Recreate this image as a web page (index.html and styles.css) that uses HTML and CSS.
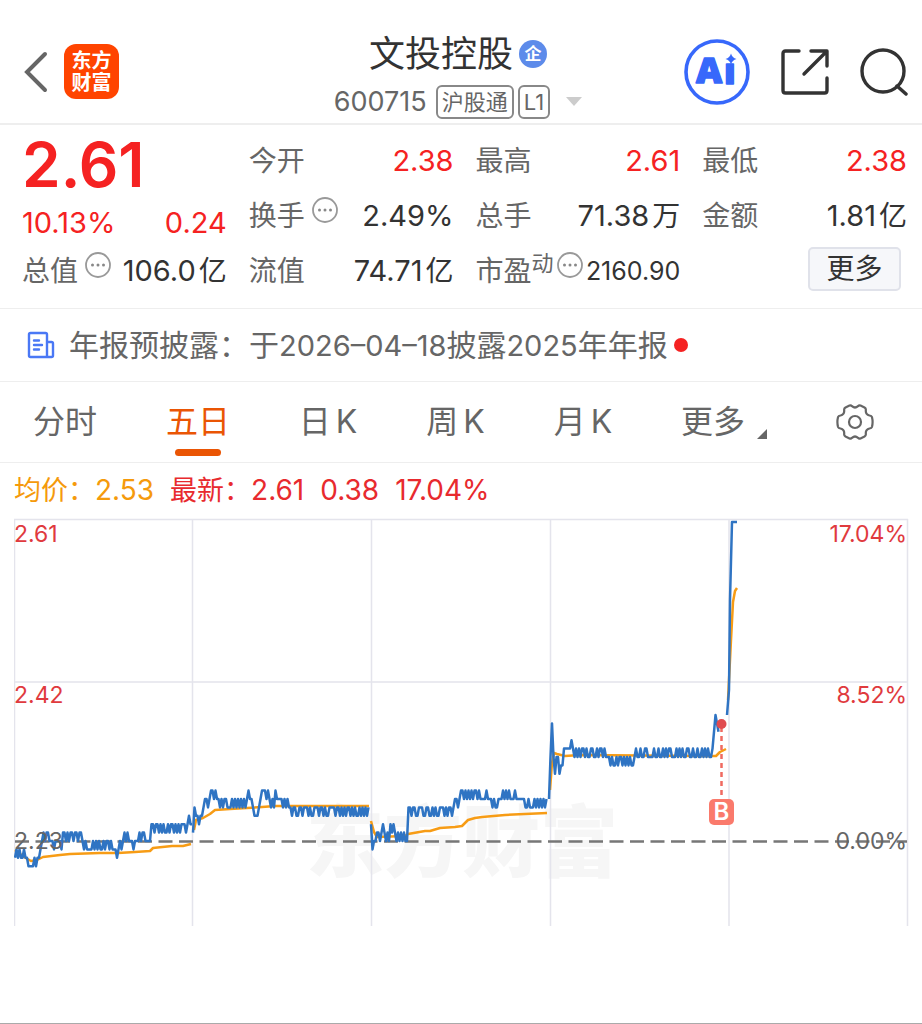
FILE: index.html
```html
<!DOCTYPE html>
<html lang="zh-CN">
<head>
<meta charset="UTF-8" />
<meta name="viewport" content="width=device-width, initial-scale=1" />
<title>文投控股 600715</title>
<link rel="stylesheet" href="styles.css">
</head>
<body>
<svg class="defs" width="0" height="0" aria-hidden="true">
  <symbol id="more" viewBox="0 0 26 26">
    <circle cx="13" cy="13" r="12" fill="none" stroke="#999" stroke-width="1.8" />
    <circle cx="7.5" cy="13" r="1.5" fill="#888" />
    <circle cx="13" cy="13" r="1.5" fill="#888" />
    <circle cx="18.5" cy="13" r="1.5" fill="#888" />
  </symbol>
</svg>

<header class="topbar">
  <div class="top-left">
    <button class="icon-btn" aria-label="返回">
      <svg width="24" height="42" viewBox="0 0 24 42"><path d="M21 3 3 21l18 18" fill="none" stroke="#666" stroke-width="4" stroke-linecap="round" /></svg>
    </button>
    <a class="logo" href="#">东方<br>财富</a>
  </div>
  <div class="top-center">
    <h1>文投控股
      <svg width="28" height="28" viewBox="0 0 28 28">
        <circle cx="14" cy="14" r="14" fill="#5d8bea" />
        <text x="14" y="20" text-anchor="middle" class="badge-text">企</text>
      </svg>
    </h1>
    <div class="code-row">
      <span class="code">600715</span>
      <span class="tag">沪股通</span>
      <span class="tag">L1</span>
      <svg class="caret" width="16" height="9" viewBox="0 0 16 9"><path d="M0 0h16L8 9z" fill="#ccc" /></svg>
    </div>
  </div>
  <div class="top-right">
    <button class="icon-btn" aria-label="Ai">
      <svg width="66" height="66" viewBox="0 0 66 66">
        <circle cx="33" cy="33" r="31" fill="none" stroke="#3768fb" stroke-width="3.6" />
        <text x="12" y="44" class="ai-text">A</text>
        <text x="40" y="45" class="ai-text">ı</text>
        <path d="M47 14.5q1.2 4.300 5.500 5.500-4.300 1.200-5.500 5.500-1.200-4.300-5.500-5.500 4.300-1.200 5.500-5.500z" fill="#3768fb" />
      </svg>
    </button>
    <button class="icon-btn" aria-label="分享">
      <svg width="48" height="48" viewBox="0 0 48 48" fill="none" stroke="#333" stroke-width="3.4" stroke-linecap="round" stroke-linejoin="round">
        <path d="M18 3H4.500Q2 3 2 5.500v37Q2 45 4.500 45h39q2.500 0 2.500-2.500V30" />
        <path d="M30 3h16v15M45 4 23 26" />
      </svg>
    </button>
    <button class="icon-btn" aria-label="搜索">
      <svg width="48" height="48" viewBox="0 0 48 48" fill="none" stroke="#333" stroke-width="3.4" stroke-linecap="round">
        <circle cx="23" cy="23" r="21" />
        <path d="m37 38 9 8" />
      </svg>
    </button>
  </div>
</header>

<section class="quote">
  <div class="price-box">
    <strong class="price">2.61</strong>
    <div class="change"><span>10.13%</span><span>0.24</span></div>
  </div>
  <div class="cell"><span class="label">今开</span><span class="value up">2.38</span></div>
  <div class="cell"><span class="label">最高</span><span class="value up">2.61</span></div>
  <div class="cell"><span class="label">最低</span><span class="value up">2.38</span></div>
  <div class="cell"><span class="label">换手</span><svg class="info"><use href="#more" /></svg><span class="value">2.49%</span></div>
  <div class="cell"><span class="label">总手</span><span class="value">71.38<i class="unit">万</i></span></div>
  <div class="cell"><span class="label">金额</span><span class="value">1.81<i class="unit">亿</i></span></div>
  <div class="cell"><span class="label">总值</span><svg class="info"><use href="#more" /></svg><span class="value">106.0<i class="unit">亿</i></span></div>
  <div class="cell"><span class="label">流值</span><span class="value">74.71<i class="unit">亿</i></span></div>
  <div class="cell pe"><span class="label">市盈<sup>动</sup></span><svg class="info"><use href="#more" /></svg><span class="value small">2160.90</span></div>
  <div class="cell"><button class="more-btn">更多</button></div>
</section>

<a class="notice" href="#">
  <svg width="28" height="28" viewBox="0 0 28 28" fill="none" stroke="#4a78f5" stroke-width="2.400" stroke-linejoin="round" stroke-linecap="round">
    <path d="M20 26H3.500Q2 26 2 24.500v-21Q2 2 3.500 2h15Q20 2 20 3.500zV11h4.500q1.500 0 1.500 1.500v12q0 1.500-1.500 1.500H20M7 9.500h5M7 14h8M7 18.500h5" />
  </svg>
  <span>年报预披露：于<span class="num">2026–04–18</span>披露<span class="num">2025</span>年年报</span>
  <span class="dot"></span>
</a>

<nav class="tabs">
  <button>分时</button>
  <button class="active">五日</button>
  <button>日<span class="k">K</span></button>
  <button>周<span class="k">K</span></button>
  <button>月<span class="k">K</span></button>
  <button>更多<svg class="corner" width="10" height="10" viewBox="0 0 10 10"><path d="M10 0v10H0z" fill="#666" /></svg></button>
  <button class="icon-btn" aria-label="设置">
    <svg width="38" height="36" viewBox="0 0 38 36" fill="none" stroke="#666" stroke-width="2.200" stroke-linejoin="round">
      <path d="M13.500 1.500Q15 1 16 2.200q3 2.600 6 0 1-1.200 2.500-.7l4 2q1.700 1 1.300 3-.3 4 3.700 5 2 .3 2.500 1.700 1.200 4.800 0 9.600-.5 1.400-2.500 1.700-4 1-3.700 5 .4 2-1.300 3l-4 2q-1.500.5-2.500-.7-3-2.600-6 0-1 1.200-2.500.7l-4-2q-1.700-1-1.300-3 .3-4-3.700-5-2-.3-2.500-1.700-1.200-4.800 0-9.600.5-1.400 2.500-1.700 4-1 3.700-5-.4-2 1.300-3z" />
      <circle cx="19" cy="18" r="6" />
    </svg>
  </button>
</nav>

<div class="legend">
  <span class="avg">均价：<span class="num">2.53</span></span>
  <span class="last">最新：<span class="num">2.61</span></span>
  <span class="last num">0.38</span>
  <span class="last num">17.04%</span>
</div>

<main class="chart">
  <svg viewBox="14 518 895 409" role="img" aria-label="五日走势">
    <text x="306" y="871" class="watermark">东方财富</text>
    <path class="grid" d="M14 519.500H908M14 682H908M14.500 519V926M192.500 519V926M371.500 519V926M550.500 519V926M729 519V926M907.500 519V926" />
    <path class="base" d="M15 841.500H907" />

    <g class="line avg-line">
      <polyline points="15,850 24,857 31,861 37,860 43,857 60,855 70,854 100,853 118,853 135,852 150,851 153,848 172,846 183,846 191,844" />
      <polyline points="194,830 196,820 203,818 210,814 215,810 230,809 247,808 262,807 275,806 369,806" />
      <polyline points="371,821 374,832 377,837 405,836 408,834 425,831 430,831 440,828 455,827 462,826 468,820 475,818 482,817 505,815 547,813" />
      <polyline points="550,790 552,763 554,753 557,754 565,756 580,755 700,756 716,756 720,752 726,749" />
      <polyline points="728,700 731,640 733,602 735,591 737,588" />
    </g>
    <g class="line price-line" id="priceLine">
      <polyline points="727,715 729,690 730,600 732,522 737,522" />
    </g>

    <path class="trade-link" d="M721.500 727V799" />
    <circle class="trade-dot" cx="721.500" cy="724" r="5" />
    <rect class="trade-flag" x="709" y="799" width="25" height="26" rx="5" />
    <text x="721.500" y="820" text-anchor="middle" class="trade-text">B</text>

    <g class="axis">
      <text x="14" y="542">2.61</text>
      <text x="14" y="703">2.42</text>
      <text x="14" y="849" class="mid">2.23</text>
    </g>
    <g class="axis" text-anchor="end">
      <text x="907" y="542">17.04%</text>
      <text x="907" y="703">8.52%</text>
      <text x="907" y="849" class="mid">0.00%</text>
    </g>
  </svg>
</main>

<script src="chart.js"></script>
</body>
</html>
```
FILE: styles.css
```css
* {
  margin: 0;
  padding: 0;
  box-sizing: border-box;
}
body {
  font-family: Inter, "Noto Sans CJK SC", sans-serif;
  background: #fff;
  color: #333;
  min-height: 100vh;
  border-bottom: 1px solid #aaa;
}
button {
  font: inherit;
  color: inherit;
  background: none;
  border: none;
  cursor: pointer;
}
a {
  color: inherit;
  text-decoration: none;
}
svg {
  display: block;
  flex: none;
}
.defs {
  position: absolute;
}

.topbar {
  display: grid;
  grid-template-columns: 1fr auto 1fr;
  align-items: center;
  padding: 26px 14px 0;
  height: 125px;
  border-bottom: 2px solid #eee;
}
.top-left, .top-right {
  display: flex;
  align-items: center;
  padding-bottom: 6px;
}
.top-left {
  gap: 16px;
  padding-left: 10px;
}
.top-right {
  justify-content: flex-end;
  gap: 31px;
}
.logo {
  width: 55px;
  height: 55px;
  padding-top: 6px;
  border-radius: 12px;
  background: #ff4400;
  color: #fff;
  font-size: 20px;
  font-weight: 700;
  line-height: 22px;
  text-align: center;
}
.top-center {
  padding-right: 6px;
}
h1 {
  display: flex;
  align-items: center;
  justify-content: center;
  gap: 6px;
  font-size: 36px;
  font-weight: 400;
  line-height: 54px;
}
.badge-text {
  font-size: 17px;
  font-weight: 700;
  fill: #fff;
}
.code-row {
  display: flex;
  align-items: center;
  gap: 4px;
  height: 42px;
  color: #666;
}
.code {
  font-size: 27px;
  margin-right: 5px;
}
.tag {
  height: 34px;
  padding: 0 4px;
  border: 2px solid #888;
  border-radius: 6px;
  font-size: 22px;
  line-height: 30px;
}
.caret {
  margin-left: 12px;
}
.ai-text {
  font-family: "Open Sans", sans-serif;
  font-size: 36px;
  font-weight: 800;
  fill: #3768fb;
  stroke: #3768fb;
  stroke-width: 1.5;
  stroke-linejoin: round;
}

.quote {
  display: grid;
  grid-template-columns: repeat(4, 1fr);
  grid-auto-rows: 55px;
  column-gap: 22px;
  padding: 8px 15px 10px 22px;
  border-bottom: 1px solid #eee;
  font-size: 28px;
}
.price-box {
  grid-row: span 2;
  display: flex;
  flex-direction: column;
  justify-content: space-between;
  color: #f52222;
}
.price {
  font-size: 62px;
  font-weight: 600;
  line-height: 64px;
}
.change {
  display: flex;
  justify-content: space-between;
  font-size: 29px;
  line-height: 40px;
}
.cell {
  display: flex;
  align-items: center;
  line-height: 40px;
  white-space: nowrap;
}
.label {
  color: #666;
}
.value {
  margin-left: auto;
  font-size: 29px;
}
.unit {
  font-style: normal;
  font-size: 28px;
  margin-left: 3px;
}
.up {
  color: #f52222;
}
.info {
  width: 26px;
  height: 26px;
  margin: 0 0 12px 7px;
}
.pe .info {
  margin-left: 3px;
}
.pe sup {
  font-size: 22px;
  line-height: 20px;
}
.small {
  font-size: 25px;
}
.more-btn {
  width: 93px;
  height: 44px;
  margin: 0 6px 4px auto;
  border: 2px solid #e0e2ea;
  border-radius: 5px;
  background: #f6f7fa;
}

.notice {
  display: flex;
  align-items: center;
  height: 73px;
  padding: 0 27px;
  border-bottom: 1px solid #eee;
  color: #666;
  font-size: 30px;
  line-height: 44px;
  white-space: nowrap;
}
.notice > span {
  margin-left: 14px;
}
.notice .num {
  font-size: 29px;
}
.notice .dot {
  width: 14px;
  height: 14px;
  margin-left: 6px;
  border-radius: 50%;
  background: #f52222;
}

.tabs {
  display: flex;
  align-items: center;
  justify-content: space-between;
  height: 81px;
  padding: 0 48px 0 33px;
  border-bottom: 1px solid #eee;
  color: #666;
  font-size: 32px;
}
.tabs button {
  position: relative;
  line-height: 48px;
  white-space: nowrap;
}
.tabs .k {
  margin-left: 5px;
}
.tabs .active {
  color: #ea5504;
}
.tabs .active::after {
  content: "";
  position: absolute;
  left: 9px;
  right: 9px;
  bottom: -10px;
  height: 7px;
  border-radius: 4px;
  background: #ea5504;
}
.corner {
  display: inline-block;
  margin-left: 12px;
  vertical-align: -6px;
}

.legend {
  display: flex;
  align-items: baseline;
  gap: 16px;
  height: 55px;
  padding: 0 14px;
  font-size: 27px;
  line-height: 55px;
}
.legend .num {
  font-size: 28px;
}
.avg {
  color: #f59a0c;
}
.last {
  color: #e82a2e;
}

.chart {
  padding: 0 13px 0 14px;
}
.chart svg {
  width: 100%;
  height: auto;
}
.grid {
  fill: none;
  stroke: #e4e4ec;
  stroke-width: 1.5;
}
.base {
  stroke: #777;
  stroke-width: 2.5;
  stroke-dasharray: 14 6.5;
}
.line {
  fill: none;
  stroke-width: 2.5;
  stroke-linejoin: round;
}
.avg-line {
  stroke: #f79c15;
}
.price-line {
  stroke: #2f74c3;
}
.watermark {
  font-size: 78px;
  font-weight: 900;
  fill: #f6f6f6;
}
.axis text {
  font-size: 23px;
  fill: #e03a3e;
}
.axis .mid {
  fill: #666;
}
.trade-link {
  stroke: #f06a60;
  stroke-width: 2.5;
  stroke-dasharray: 5 4;
}
.trade-dot {
  fill: #e04b50;
}
.trade-flag {
  fill: #fa7a6c;
}
.trade-text {
  font-size: 24px;
  font-weight: 600;
  fill: #fff;
}
```
FILE: chart.js
```js
// one character per tick, base 36, in cents above 2.20
const days = [
  { x: 15, ticks: '1212112110000101123434433323333244343443443443232222323232232332322212323434333233343443333554554545445455454545554565' + '5' },
  { x: 193, ticks: '47665667887899898878788777878787878789887666789998987879888878787' + '76776677677767667776776766777767767676776767667676767' },
  { x: 371, ticks: '52334434543435454343434337767766777667766767667776767767887899898989899898888988878778889898988898888887787778787878' + '78' },
  { x: 549, ticks: '8dhdbddbcceeeeefedededeededdeeddedeededddcdccdcddcdcdcdccdeddeddeeddddeddeddededeedddedededdeeddeddeddedededdegihg' }
]
const STEP = 1.5
const CENT = 8.4

const priceLine = document.getElementById('priceLine')

days.forEach(day => {
  const points = [...day.ticks].map((c, i) => {
    const y = 841 - (parseInt(c, 36) - 3) * CENT
    return `${day.x + i * STEP},${y.toFixed(1)}`
  })
  const line = document.createElementNS('http://www.w3.org/2000/svg', 'polyline')
  line.setAttribute('points', points.join(' '))
  priceLine.appendChild(line)
})
```
